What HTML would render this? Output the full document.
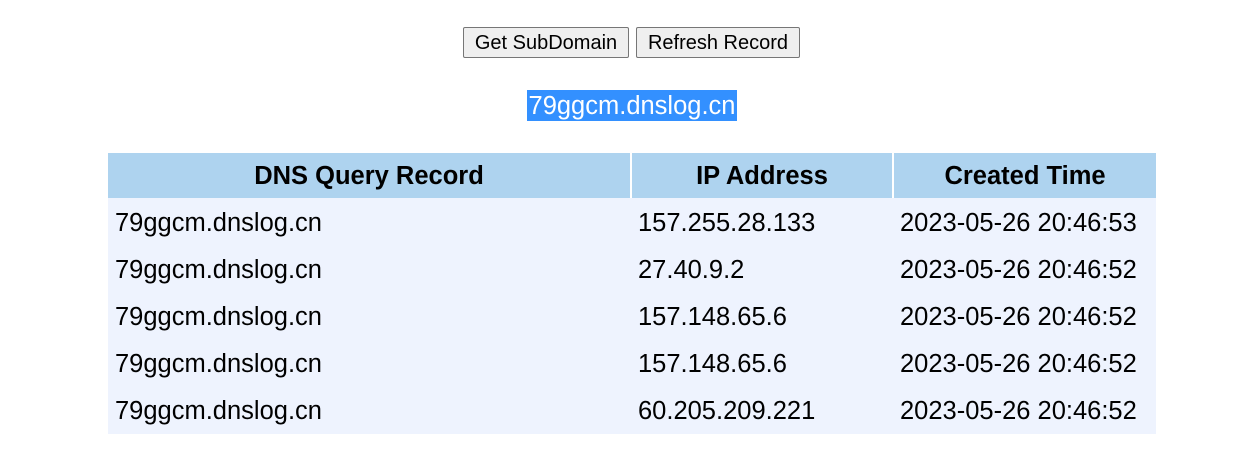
<!DOCTYPE html>
<html><head><style>
body{margin:0;background:#fff;font-family:"Liberation Sans",sans-serif;width:1256px;height:460px;overflow:hidden}
.btns{position:absolute;top:27px;left:463px;display:flex;gap:7px}
.btns div{height:29px;border:1px solid #767676;border-radius:2px;background:#efefef;font-size:20px;line-height:30px;color:#000;text-align:center}
.dom{position:absolute;top:90px;left:527px;width:210px;height:31px;background:#3390ff;color:#fff;font-size:25.5px;line-height:32px;text-align:center;white-space:nowrap}
table{position:absolute;top:153px;left:108px;width:1048px;border-collapse:collapse;font-size:25.5px}
th{background:#aed3ef;height:43px;font-weight:bold;text-align:center;padding:2px 0 0;border-right:2px solid #fff}
th:last-child{border-right:0}
td{background:#eef3fe;height:44.2px;padding:3px 0 0 7px;white-space:nowrap}
</style></head><body>
<div class="btns"><div style="width:164px">Get SubDomain</div><div style="width:162px">Refresh Record</div></div>
<div class="dom">79ggcm.dnslog.cn</div>
<table>
<tr><th style="width:522px">DNS Query Record</th><th style="width:260px">IP Address</th><th>Created Time</th></tr>
<tr><td>79ggcm.dnslog.cn</td><td>157.255.28.133</td><td>2023-05-26 20:46:53</td></tr>
<tr><td>79ggcm.dnslog.cn</td><td>27.40.9.2</td><td>2023-05-26 20:46:52</td></tr>
<tr><td>79ggcm.dnslog.cn</td><td>157.148.65.6</td><td>2023-05-26 20:46:52</td></tr>
<tr><td>79ggcm.dnslog.cn</td><td>157.148.65.6</td><td>2023-05-26 20:46:52</td></tr>
<tr><td>79ggcm.dnslog.cn</td><td>60.205.209.221</td><td>2023-05-26 20:46:52</td></tr>
</table>
</body></html>
